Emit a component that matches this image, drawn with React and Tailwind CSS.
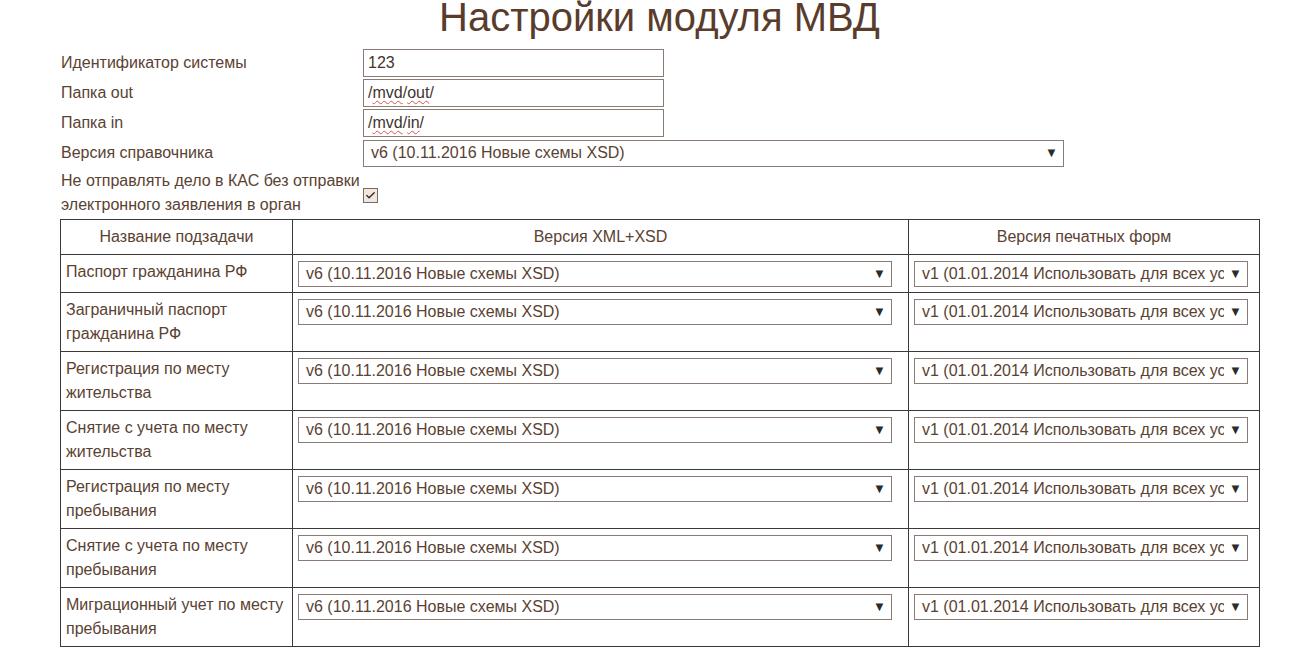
import { Check } from 'lucide-react';

const rows = [
  ['Паспорт гражданина РФ'],
  ['Заграничный паспорт', 'гражданина РФ'],
  ['Регистрация по месту', 'жительства'],
  ['Снятие с учета по месту', 'жительства'],
  ['Регистрация по месту', 'пребывания'],
  ['Снятие с учета по месту', 'пребывания'],
  ['Миграционный учет по месту', 'пребывания']
];

const Select = ({ value, className = '' }) => (
  <div className={`relative flex h-[26px] items-center overflow-hidden whitespace-nowrap border border-[#8a7c74] bg-white pl-[7px] text-[#5a4232] ${className}`}>
    <span>{value}</span>
    <span className="absolute right-0 top-0 flex h-full w-[23px] items-center justify-center bg-white text-[13px] text-[#2b2b2b]">▼</span>
  </div>
);

const Field = ({ children }) => (
  <div className="flex h-[28px] w-[301px] items-center border border-[#8a7c74] bg-white px-[4px] text-[#3f3530]">{children}</div>
);

const Wavy = ({ children }) => <span className="underline decoration-wavy decoration-[#d9534f] decoration-1 underline-offset-2">{children}</span>;

const App = () => {
  return (
    <div className="min-h-screen bg-white font-['Liberation_Sans',Arial,sans-serif] text-[16px] text-[#5a4232]">
      <h1 className="-mt-[7px] pl-[8px] text-center text-[40px] leading-[48px] text-[#5a3c2c]">Настройки модуля МВД</h1>
      <div className="ml-[61px] mt-[7px] grid grid-cols-[302px_auto] content-start">
        <div className="flex h-[30px] items-center">Идентификатор системы</div>
        <div className="flex h-[30px] items-center"><Field>123</Field></div>
        <div className="flex h-[30px] items-center">Папка out</div>
        <div className="flex h-[30px] items-center"><Field>/<Wavy>mvd</Wavy>/<Wavy>out</Wavy>/</Field></div>
        <div className="flex h-[30px] items-center">Папка in</div>
        <div className="flex h-[30px] items-center"><Field>/<Wavy>mvd</Wavy>/<Wavy>in</Wavy>/</Field></div>
        <div className="flex h-[30px] items-center">Версия справочника</div>
        <div className="flex h-[30px] items-center"><Select value="v6 (10.11.2016 Новые схемы XSD)" className="h-[27px] w-[701px]" /></div>
        <div className="py-[1px] leading-[24px]">Не отправлять дело в КАС без отправки<br />электронного заявления в орган</div>
        <div className="flex items-center pt-[4px]">
          <div className="flex h-[15px] w-[15px] items-center justify-center border border-[#7a6a60] bg-[#f1e7e1]">
            <Check className="h-[11px] w-[11px] text-[#3a2a22]" strokeWidth={3} />
          </div>
        </div>
      </div>
      <table className="ml-[60px] mt-[1px] w-[1199px] table-fixed border-collapse border border-[#3a3a3a]">
        <colgroup>
          <col className="w-[232px]" />
          <col className="w-[616px]" />
          <col className="w-[351px]" />
        </colgroup>
        <thead>
          <tr className="h-[35px]">
            <th className="border border-[#3a3a3a] text-center font-normal">Название подзадачи</th>
            <th className="border border-[#3a3a3a] text-center font-normal">Версия XML+XSD</th>
            <th className="border border-[#3a3a3a] text-center font-normal">Версия печатных форм</th>
          </tr>
        </thead>
        <tbody>
          {rows.map((lines, i) => (
            <tr key={i}>
              <td className="border border-[#3a3a3a] px-[5px] py-[5px] align-top leading-[24px]">
                {lines.map((line, j) => <div key={j}>{line}</div>)}
              </td>
              <td className="border border-[#3a3a3a] px-[5px] pb-[5px] pt-[6px] align-top">
                <Select value="v6 (10.11.2016 Новые схемы XSD)" className="w-[594px]" />
              </td>
              <td className="border border-[#3a3a3a] px-[5px] pb-[5px] pt-[6px] align-top">
                <Select value="v1 (01.01.2014 Использовать для всех услуг)" className="w-[334px]" />
              </td>
            </tr>
          ))}
        </tbody>
      </table>
    </div>
  );
};

export default App;
